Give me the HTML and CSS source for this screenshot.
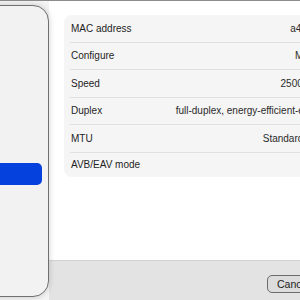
FILE: index.html
```html
<!DOCTYPE html>
<html lang="en">
<head>
  <meta charset="UTF-8">
  <meta name="viewport" content="width=device-width, initial-scale=1.0">
  <title>Ethernet Details</title>
  <link rel="stylesheet" href="styles.css">
</head>
<body>
  <div class="window">
    <div class="sidebar">
      <div class="sidebar-item selected"></div>
    </div>
    <div class="main">
      <div class="content">
        <div class="card">
          <div class="row">
            <span class="label">MAC address</span>
            <span class="value">a4:83:e7:5b:2f:10</span>
          </div>
          <div class="row">
            <span class="label">Configure</span>
            <span class="value popup">Manually</span>
          </div>
          <div class="row">
            <span class="label">Speed</span>
            <span class="value popup">2500Base-T</span>
          </div>
          <div class="row">
            <span class="label">Duplex</span>
            <span class="value popup">full-duplex, energy-efficient-ethernet</span>
          </div>
          <div class="row">
            <span class="label">MTU</span>
            <span class="value popup">Standard (1500)</span>
          </div>
          <div class="row last">
            <span class="label">AVB/EAV mode</span>
            <span class="toggle"></span>
          </div>
        </div>
      </div>
      <div class="footer">
        <button class="button">Cancel</button>
        <button class="button primary">OK</button>
      </div>
    </div>
  </div>
</body>
</html>
```

FILE: styles.css
```css
/* Sheet with an inset sidebar, a settings card and a footer */
body {
  margin: 0;
  font-family: "Liberation Sans", Arial, sans-serif;
  font-size: 10px;
  color: #1f1f1f;
  overflow: hidden;
}
.window {
  display: flex;
  height: 299px;
  border-top: 1px solid #8c8c8c;
  background: #f4f4f4;
}
.sidebar {
  flex-shrink: 0;
  width: 69px;
  height: 292px;
  margin: 4px 0 0 -20px;
  padding: 157px 6px 0 0;
  box-sizing: border-box;
  background: #f2f2f2;
  border: 1px solid #707070;
  border-radius: 0 16px 16px 0;
  box-shadow: 0 0 6px rgba(0, 0, 0, 0.18);
  position: relative; /* keeps the shadow above the main area */
  z-index: 1;
}
.sidebar-item {
  height: 22px;
  border-radius: 5px;
}
.sidebar-item.selected {
  background: #0541dc;
}
.main {
  flex: 1;
  display: flex;
  flex-direction: column;
  min-width: 0;
  background: #ffffff;
}
.content {
  flex: 1;
  padding: 14px 0 0 15px;
}
.card {
  width: 310px;
  padding: 0 6px;
  box-sizing: border-box;
  background: #f5f5f5;
  border-radius: 8px;
}
.row {
  display: flex;
  align-items: center;
  justify-content: space-between;
  height: 27.5px;
  padding-left: 1px;
  box-sizing: border-box;
  border-bottom: 1px solid #e0e0e0;
  white-space: nowrap;
}
.row.last {
  height: 24.5px;
  border-bottom: none;
}
.value {
  color: #2a2a2a;
}
.value.popup {
  margin-right: 33px;
}
.toggle {
  width: 26px;
  height: 15px;
  border-radius: 8px;
  background: #dcdcdc;
}
.footer {
  height: 40px;
  display: flex;
  align-items: flex-start;
  gap: 8px;
  padding: 14px 0 0 218px;
  box-sizing: border-box;
  background: #e3e3e3;
  border-top: 1px solid #d3d3d3;
}
.button {
  flex-shrink: 0;
  height: 18px;
  padding: 0 9px;
  font-family: inherit;
  font-size: 10.5px;
  color: #1a1a1a;
  background: #dcdcdc;
  border: 1px solid #6c6c6c;
  border-radius: 5px;
}
.button.primary {
  color: #fff;
  background: #0541dc;
  border-color: #0541dc;
}
```
